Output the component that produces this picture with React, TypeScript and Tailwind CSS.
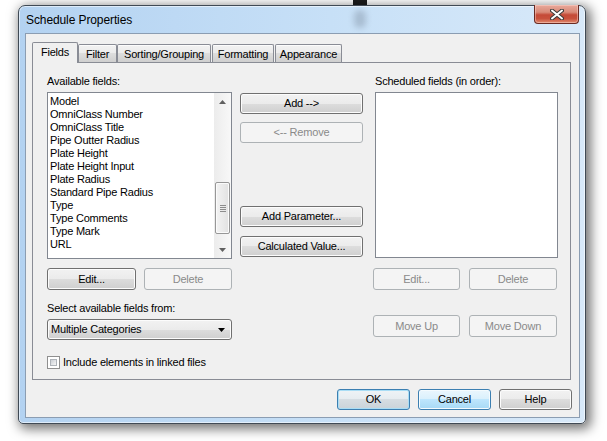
import React from "react";

type Variant = "normal" | "disabled" | "default" | "hot";

function Btn({
  label,
  className = "",
  variant = "normal",
}: {
  label: string;
  className?: string;
  variant?: Variant;
}) {
  const v = {
    normal:
      "border-[#707070] bg-[linear-gradient(#f2f2f2_0%,#ebebeb_50%,#dddddd_50%,#cfcfcf_100%)] shadow-[inset_0_0_0_1px_#fcfcfc] text-black",
    disabled: "border-[#adb2b5] bg-[#f4f4f4] text-[#8a8a8a]",
    default:
      "border-[#3c7fb1] bg-[linear-gradient(#eef3f6_0%,#e6ecf0_50%,#d6dde2_50%,#cad3d9_100%)] shadow-[inset_0_0_0_1px_#a9ddf5] text-black",
    hot: "border-[#3c7fb1] bg-[linear-gradient(#eaf6fd_0%,#d9f0fc_50%,#bee6fd_50%,#a7d9f5_100%)] shadow-[inset_0_0_0_1px_#f4fbfe] text-black",
  }[variant];
  return (
    <div
      className={`flex items-center justify-center rounded-[3px] border ${v} ${className}`}
    >
      {label}
    </div>
  );
}

const items = [
  "Model",
  "OmniClass Number",
  "OmniClass Title",
  "Pipe Outter Radius",
  "Plate Height",
  "Plate Height Input",
  "Plate Radius",
  "Standard Pipe Radius",
  "Type",
  "Type Comments",
  "Type Mark",
  "URL",
];

function Scrollbar() {
  return (
    <div className="w-[17px] flex flex-col bg-[linear-gradient(to_right,#ececec,#f8f8f8)]">
      <div className="h-[17px] flex items-center justify-center">
        <svg width="7" height="4" viewBox="0 0 7 4">
          <polygon points="3.5,0 7,4 0,4" fill="#606060" />
        </svg>
      </div>
      <div className="flex-1 flex flex-col">
        <div className="mt-[72px] mx-[1px] h-[52px] rounded-[2px] border border-[#979797] bg-[linear-gradient(to_right,#f3f3f3,#e2e2e2)] shadow-[inset_0_0_0_1px_#fbfbfb] flex flex-col items-center justify-center gap-[1px]">
          <div className="w-[6px] h-px bg-[#8c8c8c]" />
          <div className="w-[6px] h-px bg-[#8c8c8c]" />
          <div className="w-[6px] h-px bg-[#8c8c8c]" />
          <div className="w-[6px] h-px bg-[#8c8c8c]" />
        </div>
      </div>
      <div className="h-[17px] flex items-center justify-center">
        <svg width="7" height="4" viewBox="0 0 7 4">
          <polygon points="0,0 7,0 3.5,4" fill="#606060" />
        </svg>
      </div>
    </div>
  );
}

function Tab({
  label,
  selected = false,
  className = "",
}: {
  label: string;
  selected?: boolean;
  className?: string;
}) {
  if (selected) {
    return (
      <div
        className={`relative z-10 -mb-px h-[21px] border border-b-0 border-[#898c95] bg-[#f0f0f0] flex items-start justify-center pt-[3px] rounded-t-[2px] ${className}`}
      >
        {label}
      </div>
    );
  }
  return (
    <div
      className={`h-[18px] border border-b-0 border-[#898c95] bg-[linear-gradient(#f2f2f2_0%,#ebebeb_50%,#dddddd_50%,#cfcfcf_100%)] shadow-[inset_0_1px_0_#fcfcfc] flex items-center justify-center pt-px rounded-t-[2px] ${className}`}
    >
      {label}
    </div>
  );
}

export default function App() {
  return (
    <div className="relative w-[607px] h-[441px] bg-white overflow-hidden pl-[18px] pt-[5px] font-['Liberation_Sans',Arial,sans-serif] text-[11px] leading-[13px] tracking-[-0.2px] text-black">
      {/* something dark behind the glass, above the window */}
      <div className="absolute left-[353px] top-0 w-[14px] h-[5px] bg-[#1c1c1c]" />

      {/* window */}
      <div className="relative w-[568px] h-[419px] rounded-t-[7px] rounded-b-[5px] border border-[#404a55] bg-[linear-gradient(to_right,#b3d2f1,#c7e0f7_55%,#d8e9f9)] shadow-[3px_3px_12px_2px_rgba(0,0,0,0.55),inset_0_0_0_1px_rgba(255,255,255,0.55)] flex flex-col pl-[6px] pr-[5px] pb-[5px]">
        {/* blurred glass reflection */}
        <div className="absolute left-[335px] top-[4px] w-[12px] h-[18px] rounded-[5px] bg-[#7f90a3] opacity-45 blur-[3px]" />

        {/* title bar */}
        <div className="relative h-[27px] flex items-center">
          <div className="pl-[1px] pt-[1px] text-[12px] leading-[14px] tracking-[-0.1px] text-black">
            Schedule Properties
          </div>
          <div className="ml-auto self-start -mt-px mr-[1px] w-[45px] h-[19px] rounded-b-[4px] border border-t-0 border-[#6a2a22] bg-[linear-gradient(#e9a99b_0%,#d88a78_40%,#c54a37_55%,#c8513c_75%,#e08a6e_100%)] shadow-[inset_0_0_0_1px_rgba(255,220,210,0.45)] flex items-center justify-center">
            <svg width="14" height="11" viewBox="0 0 14 11">
              <path
                d="M2 1.5 L12 9.5 M12 1.5 L2 9.5"
                stroke="#3a3a3a"
                strokeWidth="4"
                strokeLinecap="round"
              />
              <path
                d="M2 1.5 L12 9.5 M12 1.5 L2 9.5"
                stroke="#ffffff"
                strokeWidth="2"
                strokeLinecap="round"
              />
            </svg>
          </div>
        </div>

        {/* client area */}
        <div className="flex-1 border border-[#8b9db2] bg-[#f0f0f0] pl-[6px] pr-[8px] pt-[7px] flex flex-col">
          {/* tabs */}
          <div className="h-[21px] flex items-end">
            <Tab label="Fields" selected className="w-[46px] h-[20px]" />
            <Tab label="Filter" className="w-[39px]" />
            <Tab label="Sorting/Grouping" className="w-[94px]" />
            <Tab label="Formatting" className="w-[62px] ml-px" />
            <Tab label="Appearance" className="w-[67px] ml-px" />
          </div>

          {/* tab panel */}
          <div className="h-[318px] border border-[#898c95] bg-[#f0f0f0] pl-[14px] pt-[12px] flex">
            {/* left column */}
            <div className="w-[185px] flex flex-col">
              <div className="h-[13px]">Available fields:</div>
              <div className="mt-[4px] h-[167px] w-full border border-[#828790] bg-white flex">
                <div className="flex-1 pt-[2px] pl-[2px]">
                  {items.map((it) => (
                    <div key={it} className="h-[13px] whitespace-nowrap">
                      {it}
                    </div>
                  ))}
                </div>
                <Scrollbar />
              </div>
              <div className="mt-[9px] flex">
                <Btn label="Edit..." className="w-[89px] h-[22px]" />
                <Btn
                  label="Delete"
                  variant="disabled"
                  className="ml-[8px] w-[88px] h-[22px]"
                />
              </div>
              <div className="mt-[12px] h-[13px]">
                Select available fields from:
              </div>
              <div className="mt-[4px] h-[21px] w-full rounded-[3px] border border-[#707070] bg-[linear-gradient(#f2f2f2_0%,#ebebeb_50%,#dddddd_50%,#cfcfcf_100%)] shadow-[inset_0_0_0_1px_#fcfcfc] flex items-center pl-[3px] pr-[6px]">
                <span>Multiple Categories</span>
                <svg className="ml-auto" width="7" height="4" viewBox="0 0 7 4">
                  <polygon points="0,0 7,0 3.5,4" fill="#000" />
                </svg>
              </div>
              <div className="mt-[16px] flex items-center">
                <div className="w-[13px] h-[13px] border border-[#8f8f8f] bg-white p-[2px]">
                  <div className="w-full h-full border border-[#aeb3b9] bg-[linear-gradient(135deg,#cbcfd5,#f6f6f6)]" />
                </div>
                <span className="ml-[3px]">Include elements in linked files</span>
              </div>
            </div>

            {/* middle column */}
            <div className="ml-[8px] w-[123px] pt-[18px] flex flex-col">
              <Btn label="Add -->" className="h-[21px]" />
              <Btn
                label="<-- Remove"
                variant="disabled"
                className="mt-[8px] h-[21px]"
              />
              <Btn label="Add Parameter..." className="mt-[63px] h-[21px]" />
              <Btn label="Calculated Value..." className="mt-[9px] h-[21px]" />
            </div>

            {/* right column */}
            <div className="ml-[10px] w-[185px] flex flex-col">
              <div className="h-[13px] pl-[2px]">Scheduled fields (in order):</div>
              <div className="mt-[4px] ml-[2px] h-[166px] w-[183px] border border-[#828790] bg-white" />
              <div className="mt-[10px] flex">
                <Btn
                  label="Edit..."
                  variant="disabled"
                  className="w-[87px] h-[22px]"
                />
                <Btn
                  label="Delete"
                  variant="disabled"
                  className="ml-[9px] w-[88px] h-[22px]"
                />
              </div>
              <div className="mt-[25px] flex">
                <Btn
                  label="Move Up"
                  variant="disabled"
                  className="w-[87px] h-[22px]"
                />
                <Btn
                  label="Move Down"
                  variant="disabled"
                  className="ml-[9px] w-[88px] h-[22px]"
                />
              </div>
            </div>
          </div>

          {/* dialog buttons */}
          <div className="mt-[9px] -mr-px flex justify-end gap-[8px]">
            <Btn label="OK" variant="default" className="w-[73px] h-[21px]" />
            <Btn label="Cancel" variant="hot" className="w-[73px] h-[21px]" />
            <Btn label="Help" className="w-[73px] h-[21px]" />
          </div>
        </div>
      </div>
    </div>
  );
}
